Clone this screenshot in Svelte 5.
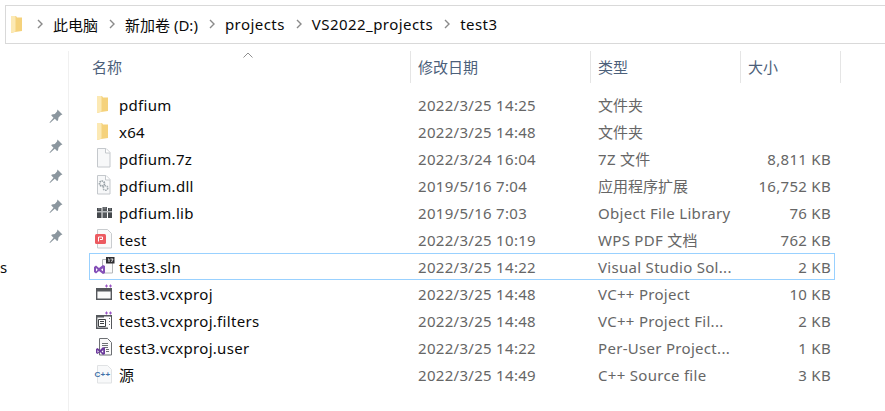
<script>
	const crumbs = ['此电脑', '新加卷 (D:)', 'projects', 'VS2022_projects', 'test3'];

	const files = [
		{ icon: 'folder', name: 'pdfium', date: '2022/3/25 14:25', type: '文件夹', size: '' },
		{ icon: 'folder', name: 'x64', date: '2022/3/25 14:48', type: '文件夹', size: '' },
		{ icon: 'blank', name: 'pdfium.7z', date: '2022/3/24 16:04', type: '7Z 文件', size: '8,811 KB' },
		{ icon: 'dll', name: 'pdfium.dll', date: '2019/5/16 7:04', type: '应用程序扩展', size: '16,752 KB' },
		{ icon: 'lib', name: 'pdfium.lib', date: '2019/5/16 7:03', type: 'Object File Library', size: '76 KB' },
		{ icon: 'pdf', name: 'test', date: '2022/3/25 10:19', type: 'WPS PDF 文档', size: '762 KB' },
		{ icon: 'sln', name: 'test3.sln', date: '2022/3/25 14:22', type: 'Visual Studio Sol...', size: '2 KB', selected: true },
		{ icon: 'vcx', name: 'test3.vcxproj', date: '2022/3/25 14:48', type: 'VC++ Project', size: '10 KB' },
		{ icon: 'filters', name: 'test3.vcxproj.filters', date: '2022/3/25 14:48', type: 'VC++ Project Fil...', size: '2 KB' },
		{ icon: 'user', name: 'test3.vcxproj.user', date: '2022/3/25 14:22', type: 'Per-User Project...', size: '1 KB' },
		{ icon: 'cpp', name: '源', date: '2022/3/25 14:49', type: 'C++ Source file', size: '3 KB' }
	];

	const pins = [1, 2, 3, 4, 5];

	// latin text runs wider in the original, strings starting in chinese do not
	const isCjk = (s) => /^[\u4e00-\u9fff]/.test(s);
</script>

{#snippet sheet()}
	<path d="M4.500 2.500h8.500l4 4v14.500h-12.500z" fill="#f7f8f9" stroke="#c4c8cc" />
	<path d="M12.500 2.500v4.500h4.500" fill="#fff" stroke="#c4c8cc" />
{/snippet}

{#snippet plus()}
	<path d="M12 5h3M13.500 3.500v3M16 5h3M17.500 3.500v3" stroke="#9a55c4" fill="none" />
{/snippet}

{#snippet fileIcon(kind)}
	<svg class="ico" viewBox="0 0 22 25" width="22" height="25">
		{#if kind === 'folder'}
			<path d="M4 4h5l1 1.500h5V19l-7 1-4 1z" fill="#f5d27c" />
			<path d="M4 4h4.500v15.500L4 21z" fill="#fce9b4" />
		{:else if kind === 'blank'}
			{@render sheet()}
		{:else if kind === 'dll'}
			{@render sheet()}
			<circle cx="9" cy="10.500" r="2.500" fill="none" stroke="#949da3" stroke-width="1.700" stroke-dasharray="1.500 0.700" />
			<circle cx="12.500" cy="15" r="2.300" fill="none" stroke="#a5adb2" stroke-width="1.600" stroke-dasharray="1.500 0.700" />
		{:else if kind === 'lib'}
			<path d="M4 8h4.500v10H4z" fill="#45494d" />
			<path d="M9.500 7h4.500v11H9.500z" fill="#55595d" />
			<path d="M15 8h4v10h-4z" fill="#45494d" />
			<path d="M4 11h15v1.500H4z" fill="#b9bcbf" />
			<path d="M5 9h2.500M10.500 8h2.500M16 9h2" stroke="#8d9094" />
		{:else if kind === 'pdf'}
			<path d="M4.500 2.500h10l4 4v14.500h-14z" fill="#fafafa" stroke="#c9cccf" />
			<rect x="2" y="7" width="11" height="10" rx="1.500" fill="#ec5a60" />
			<path d="M5.500 14.500v-4.500h4v2.500H7" fill="none" stroke="#fff" stroke-width="1" />
		{:else if kind === 'sln'}
			<path d="M9.500 5.500h10v13.500h-10z" fill="#fbfbfb" stroke="#b4b6b8" />
			<rect x="13" y="3" width="8.500" height="6.500" fill="#2f2f33" />
			<path d="M15 5h1v3M17.500 5h2.500l-1.500 3" fill="none" stroke="#fff" stroke-width="0.800" />
			<path d="M1 13l2-1.500 3 2.500 4-3 2 1v7l-2 1-4-3-3 2.500-2-1.500z" fill="#8550b8" />
			<path d="M3 14v3.500l1.700-1.800zM8 15.700l2 1.500v-3z" fill="#fff" />
		{:else if kind === 'vcx'}
			<path d="M3.700 7.700h14.600v10.600H3.700z" fill="#fafafa" stroke="#55585c" stroke-width="1.400" />
			<path d="M3 7h8v3.500H3zM11 8h8v2.500h-8z" fill="#55585c" />
			{@render plus()}
		{:else if kind === 'filters'}
			<path d="M3.700 7.700h14.600v12.600H3.700z" fill="#fafafa" stroke="#55585c" stroke-width="1.400" />
			<path d="M3 7h8v2.500H3z" fill="#55585c" />
			<path d="M5.500 11.500h7v7h-7z" fill="#fff" stroke="#3f4245" />
			<path d="M7 13.500h4M7 15.500h4" stroke="#3f4245" />
			<path d="M15 9h3v12h-3z" fill="#fff" />
			<path d="M16.500 10v1M16.500 13v1M16.500 16v1" stroke="#6d7074" />
			{@render plus()}
		{:else if kind === 'user'}
			<path d="M6.500 3.500h8l4 4v12.500h-12z" fill="#fafafa" stroke="#6d7074" />
			<path d="M9 8.500h6M9 10.500h6M11 12.500h4M13 14.500h3M13 16.500h3" stroke="#6d7074" />
			<path d="M3 14l1.500-1 2.500 2 3-3 2 1v6l-2 1-3-3-2.500 2L3 18z" fill="#6c3a9c" />
			<path d="M4.500 15v2.800l1.400-1.400zM8.500 16.400l1.700 1.300v-2.700z" fill="#fff" />
		{:else if kind === 'cpp'}
			<path d="M4.500 3.500h10l4 4v13.500h-14z" fill="#f8f9fa" stroke="#e0e2e4" />
			<text x="1.500" y="15" class="cpp-text">C++</text>
		{/if}
	</svg>
{/snippet}

<div class="page">
	<div class="address">
		<svg class="addr-folder" viewBox="0 0 12 17" width="12" height="17">
			<path d="M0 0h5l1 1.500h5V15l-7 1-4 1z" fill="#f5d27c" />
			<path d="M0 0h4.500v15.500L0 17z" fill="#fce9b4" />
		</svg>
		{#each crumbs as crumb}
			<svg class="chev" viewBox="0 0 8 10" width="8" height="10"><path d="M2 1l4 4-4 4" fill="none" stroke="#8a8a8a" stroke-width="1.400" /></svg>
			<span class="crumb" class:cjk={isCjk(crumb)}>{crumb}</span>
		{/each}
	</div>

	<div class="body">
		<aside class="nav">
			<div class="nav-pins">
				{#each pins as pin (pin)}
					<svg viewBox="0 0 14 14" width="14" height="14">
						<path d="M8.500 0.500l5 5-1.500.5-2.500 2.500-.5 3-1 .5-2.200-2.300L1 14l-.5-.5 4-4.800L2.300 6.500l.5-1 3-.5L8 2.500z" fill="#8b969e" />
					</svg>
				{/each}
			</div>
			<span class="nav-cut">s</span>
		</aside>

		<main class="list">
			<svg class="sort" viewBox="0 0 10 6" width="10" height="6"><path d="M.5 5.500L5 1l4.500 4.500" fill="none" stroke="#8f8f8f" /></svg>
			<div class="head">
				<div class="col-name">名称</div>
				<div class="col-date">修改日期</div>
				<div class="col-type">类型</div>
				<div class="col-size">大小</div>
			</div>
			<div class="rows">
				{#each files as file}
					<div class="row" class:selected={file.selected}>
						<div class="name">
							<span class="icon-box">{@render fileIcon(file.icon)}</span>
							<span>{file.name}</span>
						</div>
						<div class="date">{file.date}</div>
						<div class="type" class:cjk={isCjk(file.type)}>{file.type}</div>
						<div class="size">{file.size}</div>
					</div>
				{/each}
			</div>
		</main>
	</div>
</div>

<style>
	:global(body) {
		margin: 0;
		background: #fff;
	}

	.page {
		width: 885px;
		height: 411px;
		overflow: hidden;
		background: #fff;
		font-family: "Noto Sans", "Noto Sans CJK SC", sans-serif;
		font-size: 15px;
		color: #0a0a0a;
	}

	.address {
		display: flex;
		align-items: center;
		height: 36px;
		margin: 5px 0 0 5px;
		border: 1px solid #d9d9d9;
		border-right: none;
		padding: 0 0 1px 5px;
	}

	.addr-folder {
		margin-right: 13px;
	}

	.chev {
		margin-right: 9px;
		flex: none;
	}

	.crumb {
		margin-right: 10px;
		white-space: nowrap;
		letter-spacing: 0.45px;
	}

	.crumb.cjk {
		letter-spacing: 0;
	}

	.body {
		display: flex;
		margin-top: 7px;
	}

	.nav {
		width: 68px;
		height: 360px;
		border-right: 1px solid #f0f0f0;
		position: relative;
		flex: none;
	}

	.nav-pins {
		display: flex;
		flex-direction: column;
		align-items: flex-end;
		gap: 16px;
		padding: 58px 5px 0 0;
	}

	.nav-cut {
		position: absolute;
		left: 0;
		top: 206px;
		line-height: 20px;
	}

	.list {
		flex: 1;
		position: relative;
	}

	.sort {
		position: absolute;
		left: 174px;
		top: 1px;
	}

	.head {
		display: flex;
		height: 32px;
		color: #4c607a;
		line-height: 32px;
	}

	.head > div {
		box-sizing: border-box;
		padding-left: 7px;
		border-right: 1px solid #e5e5e5;
	}

	.head > .col-name {
		width: 342px;
		padding-left: 23px;
	}

	.col-date {
		width: 180px;
	}

	.col-type {
		width: 150px;
	}

	.col-size {
		width: 100px;
	}

	.rows {
		margin: 8px 0 0 20px;
		width: 746px;
	}

	.row {
		display: flex;
		align-items: center;
		height: 27px;
		box-sizing: border-box;
		color: #666;
		letter-spacing: 0.3px;
	}

	.row.selected {
		border: 1px solid #99d1ff;
	}

	.name {
		display: flex;
		align-items: center;
		width: 329px;
		color: #0a0a0a;
		flex: none;
		white-space: nowrap;
	}

	.selected .name {
		margin-left: -1px;
	}

	.icon-box {
		display: flex;
		align-items: center;
		padding-left: 4px;
		width: 26px;
		flex: none;
	}

	.date {
		width: 180px;
		flex: none;
	}

	.type {
		width: 150px;
		flex: none;
		white-space: nowrap;
	}

	.type.cjk {
		letter-spacing: 0;
	}

	.size {
		width: 83px;
		text-align: right;
		flex: none;
	}

	.selected .size {
		width: 82px;
		margin-left: 1px;
	}

	.ico {
		display: block;
		flex: none;
	}

	.cpp-text {
		font-family: "Liberation Sans", sans-serif;
		font-size: 8px;
		font-weight: 700;
		letter-spacing: 0.3px;
		fill: #3f6fa8;
	}
</style>
